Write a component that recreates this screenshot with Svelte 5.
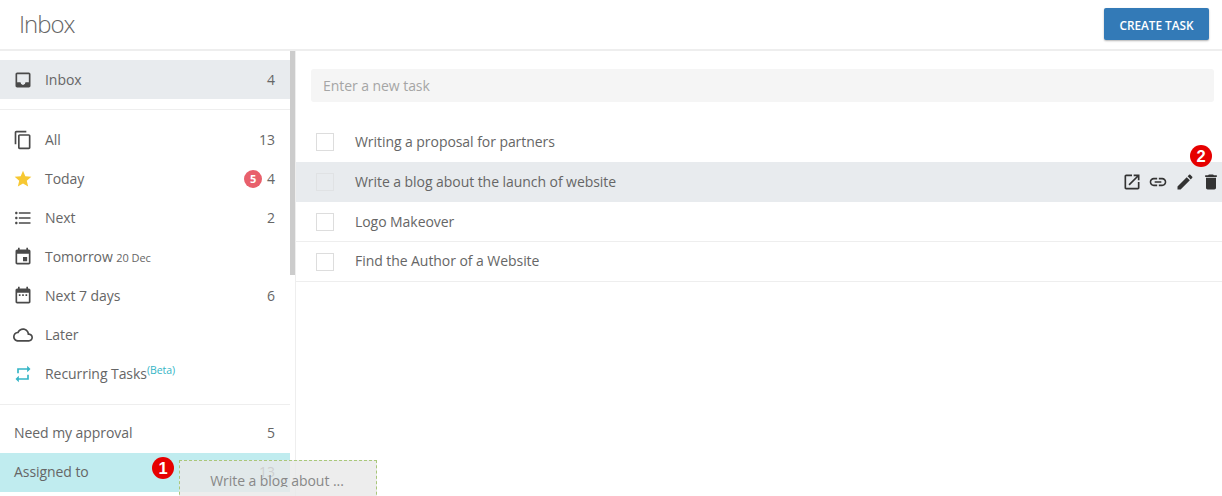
<script>
  const tasks = [
    { title: "Writing a proposal for partners" },
    { title: "Write a blog about the launch of website", active: true },
    { title: "Logo Makeover", line: true },
    { title: "Find the Author of a Website", line: true }
  ];

  const ic = {
    inbox: "M19 3H5c-1.1 0-2 .9-2 2v14c0 1.1.9 2 2 2h14c1.1 0 2-.9 2-2V5c0-1.1-.9-2-2-2zM5 15V5h14v10h-4c0 1.66-1.35 3-3 3s-3-1.34-3-3H5z",
    copy: "M16 1H4c-1.1 0-2 .9-2 2v14h2V3h12V1zm3 4H8c-1.1 0-2 .9-2 2v14c0 1.1.9 2 2 2h11c1.1 0 2-.9 2-2V7c0-1.1-.9-2-2-2zm0 16H8V7h11v14z",
    star: "M12 17.27L18.18 21l-1.64-7.03L22 9.24l-7.19-.61L12 2 9.19 8.63 2 9.24l5.46 4.73L5.82 21z",
    list: "M4 10.5c-.83 0-1.5.67-1.5 1.5s.67 1.5 1.5 1.5 1.5-.67 1.5-1.5-.67-1.5-1.5-1.5zm0-6c-.83 0-1.5.67-1.5 1.5S3.17 7.5 4 7.5 5.5 6.83 5.5 6 4.83 4.5 4 4.5zm0 12c-.83 0-1.5.68-1.5 1.5s.68 1.5 1.5 1.5 1.5-.68 1.5-1.5-.67-1.5-1.5-1.5zM7 19h14v-2H7v2zm0-6h14v-2H7v2zm0-8v2h14V5H7z",
    event: "M17 12h-5v5h5v-5zM16 1v2H8V1H6v2H5c-1.11 0-1.99.9-1.99 2L3 19c0 1.1.89 2 2 2h14c1.1 0 2-.9 2-2V5c0-1.1-.9-2-2-2h-1V1h-2zm3 18H5V8h14v11z",
    week: "M19 3h-1V1h-2v2H8V1H6v2H5c-1.11 0-2 .9-2 2v14c0 1.1.89 2 2 2h14c1.1 0 2-.9 2-2V5c0-1.1-.9-2-2-2zm0 16H5V8h14v11zM7 10h2v2H7zm4 0h2v2h-2zm4 0h2v2h-2z",
    cloud: "M19.35 10.04C18.67 6.59 15.64 4 12 4 9.11 4 6.6 5.64 5.35 8.04 2.34 8.36 0 10.91 0 14c0 3.31 2.69 6 6 6h13c2.76 0 5-2.24 5-5 0-2.64-2.05-4.78-4.65-4.96zM19 18H6c-2.21 0-4-1.79-4-4s1.79-4 4-4h.71C7.37 7.69 9.48 6 12 6c3.04 0 5.5 2.46 5.5 5.5v.5H19c1.66 0 3 1.34 3 3s-1.34 3-3 3z",
    repeat: "M7 7h10v3l4-4-4-4v3H5v6h2V7zm10 10H7v-3l-4 4 4 4v-3h12v-6h-2v4z",
    open: "M19 19H5V5h7V3H5c-1.11 0-2 .9-2 2v14c0 1.1.89 2 2 2h14c1.1 0 2-.9 2-2v-7h-2v7zM14 3v2h3.59l-9.83 9.83 1.41 1.41L19 6.41V10h2V3h-7z",
    link: "M3.9 12c0-1.71 1.39-3.1 3.1-3.1h4V7H7c-2.76 0-5 2.24-5 5s2.24 5 5 5h4v-1.9H7c-1.71 0-3.1-1.39-3.1-3.1zM8 13h8v-2H8v2zm9-6h-4v1.9h4c1.71 0 3.1 1.39 3.1 3.1s-1.39 3.1-3.1 3.1h-4V17h4c2.76 0 5-2.24 5-5s-2.24-5-5-5z",
    pencil: "M3 17.25V21h3.75L17.81 9.94l-3.75-3.75L3 17.25zM20.71 7.04c.39-.39.39-1.02 0-1.41l-2.34-2.34c-.39-.39-1.02-.39-1.41 0l-1.83 1.83 3.75 3.75 1.83-1.83z",
    trash: "M6 19c0 1.1.9 2 2 2h8c1.1 0 2-.9 2-2V7H6v12zM19 4h-3.5l-1-1h-5l-1 1H5v2h14V4z"
  };

  const actions = [ic.open, ic.link, ic.pencil, ic.trash];
</script>

<div class="page">
  <header class="topbar">
    <h1>Inbox</h1>
    <button class="create">CREATE TASK</button>
  </header>

  <div class="content">
    <aside class="sidebar">
      <nav class="lists">
        <div class="group top">
          <div class="row selected">
            <svg viewBox="0 0 24 24"><path d={ic.inbox} /><path d="M5 15h4c0 1.66 1.35 3 3 3s3-1.34 3-3h4v4H5z" /></svg>
            <span class="label">Inbox</span>
            <span class="count">4</span>
          </div>
        </div>

        <div class="group middle">
          <div class="row">
            <svg viewBox="0 0 24 24"><path d={ic.copy} /></svg>
            <span class="label">All</span>
            <span class="count">13</span>
          </div>
          <div class="row">
            <svg viewBox="0 0 24 24" class="yellow"><path d={ic.star} /></svg>
            <span class="label">Today</span>
            <span class="badge">5</span>
            <span class="count">4</span>
          </div>
          <div class="row">
            <svg viewBox="0 0 24 24"><path d={ic.list} /></svg>
            <span class="label">Next</span>
            <span class="count">2</span>
          </div>
          <div class="row">
            <svg viewBox="0 0 24 24"><path d={ic.event} /></svg>
            <span class="label">Tomorrow <small>20 Dec</small></span>
          </div>
          <div class="row">
            <svg viewBox="0 0 24 24"><path d={ic.week} /></svg>
            <span class="label">Next 7 days</span>
            <span class="count">6</span>
          </div>
          <div class="row">
            <svg viewBox="0 0 24 24"><path d={ic.cloud} /></svg>
            <span class="label">Later</span>
          </div>
          <div class="row">
            <svg viewBox="0 0 24 24" class="teal"><path d={ic.repeat} /></svg>
            <span class="label">Recurring Tasks<sup>(Beta)</sup></span>
          </div>
        </div>

        <div class="group bottom">
          <div class="row plain">
            <span class="label">Need my approval</span>
            <span class="count">5</span>
          </div>
          <div class="row plain assigned">
            <span class="label">Assigned to</span>
            <span class="count">13</span>
          </div>
        </div>
      </nav>
      <div class="track"><div class="thumb"></div></div>
    </aside>

    <main class="main">
      <div class="new-task">
        <input type="text" placeholder="Enter a new task" />
      </div>
      <ul class="tasks">
        {#each tasks as task}
          <li class="task" class:active={task.active} class:line={task.line}>
            <span class="check"></span>
            <span class="title">{task.title}</span>
            {#if task.active}
              <div class="actions">
                {#each actions as d}
                  <svg viewBox="0 0 24 24"><path {d} /></svg>
                {/each}
              </div>
            {/if}
          </li>
        {/each}
      </ul>
    </main>
  </div>

  <div class="ghost"><span>Write a blog about ...</span></div>
  <span class="marker one">1</span>
  <span class="marker two">2</span>
</div>

<style>
  :global(body) {
    margin: 0;
    font-family: "Open Sans", sans-serif;
    background: #fff;
  }

  .page {
    position: relative;
    width: 1222px;
    height: 496px;
    overflow: hidden;
    display: flex;
    flex-direction: column;
    color: #666;
    font-size: 14px;
    letter-spacing: -0.06px;
  }

  .topbar {
    height: 49px;
    flex: none;
    display: flex;
    align-items: center;
    justify-content: space-between;
    padding: 0 13px 0 19px;
    border-bottom: 2px solid #eee;
  }

  h1 {
    margin: 0 0 2px;
    font-size: 24px;
    font-weight: 300;
    color: #666;
    letter-spacing: -1px;
  }

  .create {
    width: 105px;
    height: 32px;
    margin-bottom: 1px;
    padding: 2px 0 0;
    border: 0;
    border-radius: 2px;
    background: #337ab7;
    color: #fff;
    font: 600 11.8px "Open Sans", sans-serif;
    box-shadow: 0 1px 2px rgba(0, 0, 0, 0.3);
  }

  .content {
    flex: 1;
    display: flex;
    min-height: 0;
  }

  .sidebar {
    width: 296px;
    flex: none;
    display: flex;
  }

  .lists {
    width: 290px;
    flex: none;
  }

  .track {
    width: 6px;
    border-right: 1px solid #eee;
    box-sizing: border-box;
  }

  .thumb {
    width: 5px;
    height: 224px;
    background: #ccc;
  }

  .group {
    padding: 10px 0;
    border-bottom: 1px solid #eee;
  }

  .group.top {
    padding-top: 9px;
  }

  .group.middle {
    padding-bottom: 11px;
  }

  .group.bottom {
    padding-top: 9px;
    border-bottom: 0;
  }

  .row {
    height: 39px;
    display: flex;
    align-items: center;
    padding: 0 15px 0 13px;
  }

  .row svg {
    width: 20px;
    height: 20px;
    margin-right: 12px;
    fill: #4a4a4a;
  }

  .row svg.yellow {
    fill: #f7c832;
  }

  .row svg.teal {
    fill: #35b5c6;
  }

  .row.plain {
    padding-left: 14px;
  }

  .row.plain span {
    margin-bottom: 2px;
  }

  .selected {
    background: #e8ebee;
  }

  .assigned {
    background: #c0ecef;
  }

  .label {
    flex: 1;
  }

  small {
    font-size: 11px;
  }

  sup {
    font-size: 10.5px;
    color: #35b5c6;
    line-height: 0;
    vertical-align: 5px;
  }

  .badge {
    width: 18px;
    height: 18px;
    margin-right: 5px;
    border-radius: 50%;
    background: #e8606c;
    color: #fff;
    font-size: 11px;
    font-weight: 700;
    line-height: 18px;
    text-align: center;
  }

  .main {
    flex: 1;
    min-width: 0;
  }

  .new-task {
    padding: 18px 8px 20px 15px;
  }

  input {
    display: block;
    box-sizing: border-box;
    width: 100%;
    height: 33px;
    padding: 0 12px;
    border: 0;
    border-radius: 3px;
    background: #f5f5f5;
    font: 14px "Open Sans", sans-serif;
    letter-spacing: -0.06px;
  }

  input::placeholder {
    color: #a5a5a5;
    opacity: 1;
  }

  .tasks {
    list-style: none;
    margin: 0;
    padding: 0;
  }

  .task {
    height: 40px;
    box-sizing: border-box;
    display: flex;
    align-items: center;
    padding: 0 1px 0 20px;
  }

  .task.line {
    border-bottom: 1px solid #eee;
  }

  .task.active {
    background: #e8ebee;
  }

  .check {
    width: 18px;
    height: 18px;
    box-sizing: border-box;
    margin-right: 21px;
    border: 1px solid #ddd;
  }

  .active .check {
    border-color: #e0e2e4;
  }

  .title {
    flex: 1;
    margin-bottom: 2px;
  }

  .task:nth-child(3) .title {
    margin-bottom: 0;
  }

  .actions {
    display: flex;
    gap: 6.3px;
  }

  .actions svg {
    width: 20px;
    height: 20px;
    fill: #333;
  }

  .ghost {
    position: absolute;
    left: 179px;
    top: 460px;
    width: 198px;
    height: 40px;
    box-sizing: border-box;
    padding: 10px 2px 0 0;
    border: 1px dashed #a9c77a;
    background: rgba(232, 232, 232, 0.8);
    color: #888;
    text-align: center;
  }

  /* the drag preview cuts its label off just under the baseline */
  .ghost span {
    display: block;
    height: 16px;
    overflow: hidden;
  }

  .marker {
    position: absolute;
    width: 22px;
    height: 22px;
    border-radius: 50%;
    background: #e60000;
    color: #fff;
    font: 700 16.5px/22px "Liberation Sans", sans-serif;
    text-align: center;
  }

  .one {
    left: 152px;
    top: 457px;
  }

  .two {
    left: 1190px;
    top: 145px;
  }
</style>
